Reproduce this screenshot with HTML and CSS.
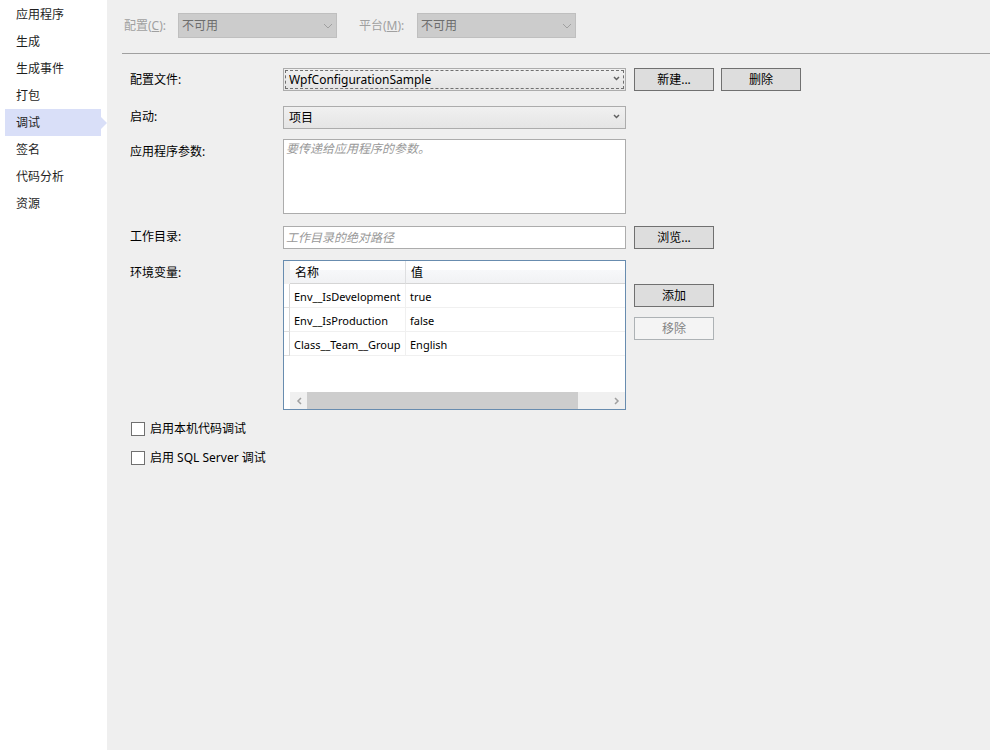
FILE: index.html
```html
<!DOCTYPE html>
<html lang="zh-CN">
<head>
<meta charset="utf-8">
<title>调试</title>
<link rel="stylesheet" href="styles.css">
</head>
<body>
<nav class="sidebar">
  <a class="tab" href="#application">应用程序</a>
  <a class="tab" href="#build">生成</a>
  <a class="tab" href="#build-events">生成事件</a>
  <a class="tab" href="#package">打包</a>
  <a class="tab tab-active" href="#debug" aria-current="page">调试</a>
  <a class="tab" href="#signing">签名</a>
  <a class="tab" href="#code-analysis">代码分析</a>
  <a class="tab" href="#resources">资源</a>
</nav>
<main class="page">
  <header class="toolbar">
    <label class="toolbar-label" for="configuration">配置(<u>C</u>):</label>
    <span class="combo combo-disabled">
      <select id="configuration" disabled><option>不可用</option></select>
      <svg class="chevron" viewBox="0 0 10 6"><path d="M1 1l4 4 4-4"/></svg>
    </span>
    <label class="toolbar-label" for="platform">平台(<u>M</u>):</label>
    <span class="combo combo-disabled">
      <select id="platform" disabled><option>不可用</option></select>
      <svg class="chevron" viewBox="0 0 10 6"><path d="M1 1l4 4 4-4"/></svg>
    </span>
  </header>
  <form class="form">
    <div class="row row-profile">
      <label class="row-label" for="profile">配置文件:</label>
      <span class="combo combo-focused">
        <select id="profile"><option>WpfConfigurationSample</option></select>
        <svg class="chevron" viewBox="0 0 7 5"><path d="M1 1l2.5 2.5L6 1"/></svg>
      </span>
      <div class="actions">
        <button type="button">新建...</button>
        <button type="button">删除</button>
      </div>
    </div>
    <div class="row row-tight">
      <label class="row-label" for="launch">启动:</label>
      <span class="combo">
        <select id="launch"><option>项目</option></select>
        <svg class="chevron" viewBox="0 0 7 5"><path d="M1 1l2.5 2.5L6 1"/></svg>
      </span>
    </div>
    <div class="row row-tall row-arguments">
      <label class="row-label" for="arguments">应用程序参数:</label>
      <textarea id="arguments" placeholder="要传递给应用程序的参数。"></textarea>
    </div>
    <div class="row">
      <label class="row-label" for="directory">工作目录:</label>
      <input class="textbox" id="directory" type="text" placeholder="工作目录的绝对路径">
      <div class="actions">
        <button type="button">浏览...</button>
      </div>
    </div>
    <div class="row row-tall row-tight">
      <span class="row-label" id="variables">环境变量:</span>
      <div class="datagrid">
        <table aria-labelledby="variables">
          <colgroup><col class="col-handle"><col class="col-name"><col></colgroup>
          <thead>
            <tr><td class="handle"></td><th scope="col">名称</th><th scope="col">值</th></tr>
          </thead>
          <tbody>
            <tr><td class="handle"></td><td>Env__IsDevelopment</td><td>true</td></tr>
            <tr><td class="handle"></td><td>Env__IsProduction</td><td>false</td></tr>
            <tr><td class="handle"></td><td>Class__Team__Group</td><td>English</td></tr>
          </tbody>
        </table>
        <div class="scrollbar">
          <button class="scroll-arrow" type="button" aria-label="向左滚动"><svg viewBox="0 0 6 8"><path d="M5 1L2 4l3 3"/></svg></button>
          <div class="scroll-track"><div class="scroll-thumb"></div></div>
          <button class="scroll-arrow" type="button" aria-label="向右滚动"><svg viewBox="0 0 6 8"><path d="M1 1l3 3-3 3"/></svg></button>
        </div>
      </div>
      <div class="actions actions-stacked">
        <button type="button">添加</button>
        <button type="button" disabled>移除</button>
      </div>
    </div>
    <div class="checks">
      <label class="check"><input type="checkbox">启用本机代码调试</label>
      <label class="check"><input type="checkbox">启用 SQL Server 调试</label>
    </div>
  </form>
</main>
</body>
</html>
```
FILE: styles.css
```css
* {
  box-sizing: border-box;
}

body {
  display: flex;
  min-height: 100vh;
  margin: 0;
  background: #efefef;
  color: #000;
  font: 12px/18px "Noto Sans", "Noto Sans CJK SC", sans-serif;
}

button,
input,
select,
textarea {
  margin: 0;
  border-radius: 0;
  color: inherit;
  font: inherit;
}

.sidebar {
  flex: 0 0 107px;
  padding: 1px 6px 0 5px;
  background: #fff;
}

.tab {
  display: block;
  position: relative;
  height: 27px;
  padding-left: 11px;
  color: #1e1e1e;
  line-height: 27px;
  text-decoration: none;
}

.tab-active {
  background: #d9dff8;
}

.tab-active::after {
  content: "";
  position: absolute;
  top: 8px;
  left: 100%;
  border: solid transparent;
  border-width: 6px 0 6px 6px;
  border-left-color: #d9dff8;
}

.page {
  flex: 1;
  min-width: 0;
  padding-left: 15px;
}

.toolbar {
  display: flex;
  align-items: center;
  height: 54px;
  padding-bottom: 2px;
  border-bottom: 1px solid #a0a0a0;
}

.toolbar-label {
  width: 56px;
  padding-left: 2px;
  color: #a0a0a0;
}

.combo-disabled + .toolbar-label {
  width: 58px;
  margin-left: 22px;
  padding-left: 0;
}

.combo {
  position: relative;
  height: 23px;
}

.combo select {
  display: block;
  width: 100%;
  height: 100%;
  padding: 0 20px 0 5px;
  border: 1px solid #acacac;
  background: linear-gradient(#f0f0f0, #e5e5e5);
  appearance: none;
  outline: none;
}

.chevron {
  position: absolute;
  top: 8px;
  right: 6px;
  width: 7px;
  height: 5px;
  fill: none;
  stroke: #606060;
  stroke-width: 1.5;
  pointer-events: none;
}

.combo-focused::after {
  content: "";
  position: absolute;
  inset: 2px;
  border: 1px dashed #707070;
  pointer-events: none;
}

.combo-disabled {
  width: 159px;
  height: 25px;
}

.combo-disabled select {
  padding-left: 3px;
  border-color: #bfbfbf;
  background: #ccc;
  color: #6d6d6d;
  opacity: 1;
}

.combo-disabled .chevron {
  top: 10px;
  right: 4px;
  width: 10px;
  height: 6px;
  stroke: #a0a0a0;
  stroke-width: 1;
}

.form {
  padding: 14px 8px;
}

.row {
  display: grid;
  grid-template-columns: 153px minmax(0, 343px) auto;
  justify-content: start;
  margin-bottom: 11px;
}

.row-label {
  padding-top: 2px;
}

.row-tall .row-label {
  padding-top: 4px;
}

.row-profile {
  margin-bottom: 15px;
}

.row-profile .row-label {
  padding-top: 3px;
}

.row-arguments {
  margin-bottom: 12px;
}

.row-tight {
  margin-bottom: 10px;
}

textarea,
.textbox {
  padding: 0 2px;
  border: 1px solid #acacac;
  background: #fff;
  outline: none;
}

textarea {
  display: block;
  height: 75px;
  resize: none;
}

.textbox {
  height: 23px;
}

::placeholder {
  color: #999;
  font-style: italic;
  opacity: 1;
}

.actions {
  display: flex;
  gap: 7px;
  margin-left: 8px;
}

.actions button {
  width: 80px;
  height: 23px;
  padding: 0;
  border: 1px solid #707070;
  background: #ddd;
}

.actions button:disabled {
  border-color: #adb2b5;
  background: #f4f4f4;
  color: #838383;
}

.actions-stacked {
  flex-direction: column;
  gap: 10px;
  padding-top: 24px;
}

.datagrid {
  display: flex;
  flex-direction: column;
  justify-content: space-between;
  height: 150px;
  border: 1px solid #688caf;
  background: #fff;
}

table {
  width: 100%;
  border-spacing: 0;
  table-layout: fixed;
}

.col-handle {
  width: 6px;
}

.col-name {
  width: 116px;
}

th,
td {
  height: 24px;
  padding: 2px 0 0 4px;
  border-bottom: 1px solid #f0f0f0;
  font-size: 11px;
  font-weight: normal;
  line-height: 18px;
  text-align: left;
  white-space: nowrap;
}

th {
  height: 23px;
  padding-left: 5px;
  border-bottom-color: #d5d5d5;
  background: linear-gradient(#fff 40%, #f7f8fa 41%, #f1f2f4);
  font-size: 12px;
}

th:nth-child(2) {
  border-right: 1px solid #dedfe1;
}

tbody td:nth-child(2) {
  border-right: 1px solid #f0f0f0;
}

.handle {
  padding: 0;
  border-right: 1px solid #d5d5d5;
  border-bottom-color: #dedede;
}

thead .handle {
  height: 23px;
  border-color: #f0f0f0;
  background: #f0f0f0;
}

.scrollbar {
  display: flex;
  height: 17px;
  margin-left: 6px;
  background: #f0f0f0;
}

.scroll-arrow {
  display: flex;
  align-items: center;
  justify-content: center;
  width: 17px;
  padding: 0;
  border: 0;
  background: none;
}

.scroll-arrow svg {
  width: 6px;
  height: 8px;
  fill: none;
  stroke: #a0a0a0;
  stroke-width: 1.5;
}

.scroll-track {
  flex: 1;
}

.scroll-thumb {
  width: 90%;
  height: 100%;
  background: #cdcdcd;
}

.checks {
  display: flex;
  flex-direction: column;
  align-items: flex-start;
  gap: 11px;
  padding: 0 1px;
}

.check {
  display: flex;
  align-items: center;
  gap: 5px;
}

.check input {
  width: 14px;
  height: 14px;
  border: 1px solid #707070;
  background: #fff;
  appearance: none;
}
```
